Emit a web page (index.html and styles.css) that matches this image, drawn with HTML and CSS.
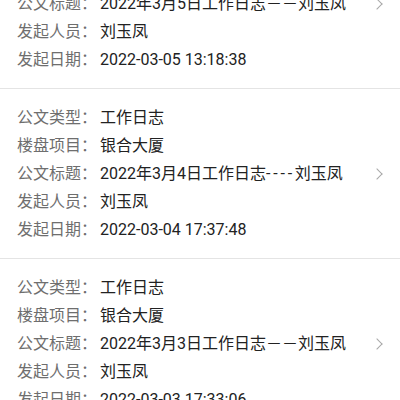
FILE: index.html
```html
<!DOCTYPE html>
<html>
    <head>
        <title>公文列表</title>
        <link rel="stylesheet" href="styles.css">
    </head>
    <body>
        <ul class="doc-list">
            <li class="doc">
                <div class="row"><span class="label">公文类型：</span><span class="value">工作日志</span></div>
                <div class="row"><span class="label">楼盘项目：</span><span class="value">银合大厦</span></div>
                <div class="row"><span class="label">公文标题：</span><span class="value">2022年3月5日工作日志－－刘玉凤</span><span class="arrow"></span></div>
                <div class="row"><span class="label">发起人员：</span><span class="value">刘玉凤</span></div>
                <div class="row"><span class="label">发起日期：</span><span class="value">2022-03-05 13:18:38</span></div>
            </li>
            <li class="doc">
                <div class="row"><span class="label">公文类型：</span><span class="value">工作日志</span></div>
                <div class="row"><span class="label">楼盘项目：</span><span class="value">银合大厦</span></div>
                <div class="row"><span class="label">公文标题：</span><span class="value">2022年3月4日工作日志<span class="dash">----</span>刘玉凤</span><span class="arrow"></span></div>
                <div class="row"><span class="label">发起人员：</span><span class="value">刘玉凤</span></div>
                <div class="row"><span class="label">发起日期：</span><span class="value">2022-03-04 17:37:48</span></div>
            </li>
            <li class="doc">
                <div class="row"><span class="label">公文类型：</span><span class="value">工作日志</span></div>
                <div class="row"><span class="label">楼盘项目：</span><span class="value">银合大厦</span></div>
                <div class="row"><span class="label">公文标题：</span><span class="value">2022年3月3日工作日志－－刘玉凤</span><span class="arrow"></span></div>
                <div class="row"><span class="label">发起人员：</span><span class="value">刘玉凤</span></div>
                <div class="row"><span class="label">发起日期：</span><span class="value">2022-03-03 17:33:06</span></div>
            </li>
        </ul>
    </body>
</html>
```

FILE: styles.css
```css
body {
    margin: 0;
    background: #fff;
    font-family: Roboto, "Noto Sans CJK SC", sans-serif;
    font-size: 16px;
    overflow: hidden;
}

.doc-list {
    list-style: none;
    margin: -81px 0 0;
    padding: 0;
}

.doc {
    padding: 15px 17px 14px;
    border-bottom: 1px solid #e4e4e4;
}

.row {
    display: flex;
    align-items: center;
    height: 28px;
    line-height: 28px;
    white-space: nowrap;
}

.label {
    width: 83px;
    flex: none;
    color: #6e6e6e;
}

.value {
    flex: 1;
    color: #222;
}

.dash {
    letter-spacing: 2.8px;
}

.arrow {
    width: 7px;
    height: 7px;
    border-top: 1px solid #a8a8a8;
    border-right: 1px solid #a8a8a8;
    transform: rotate(45deg);
    margin-right: 2px;
}
```
